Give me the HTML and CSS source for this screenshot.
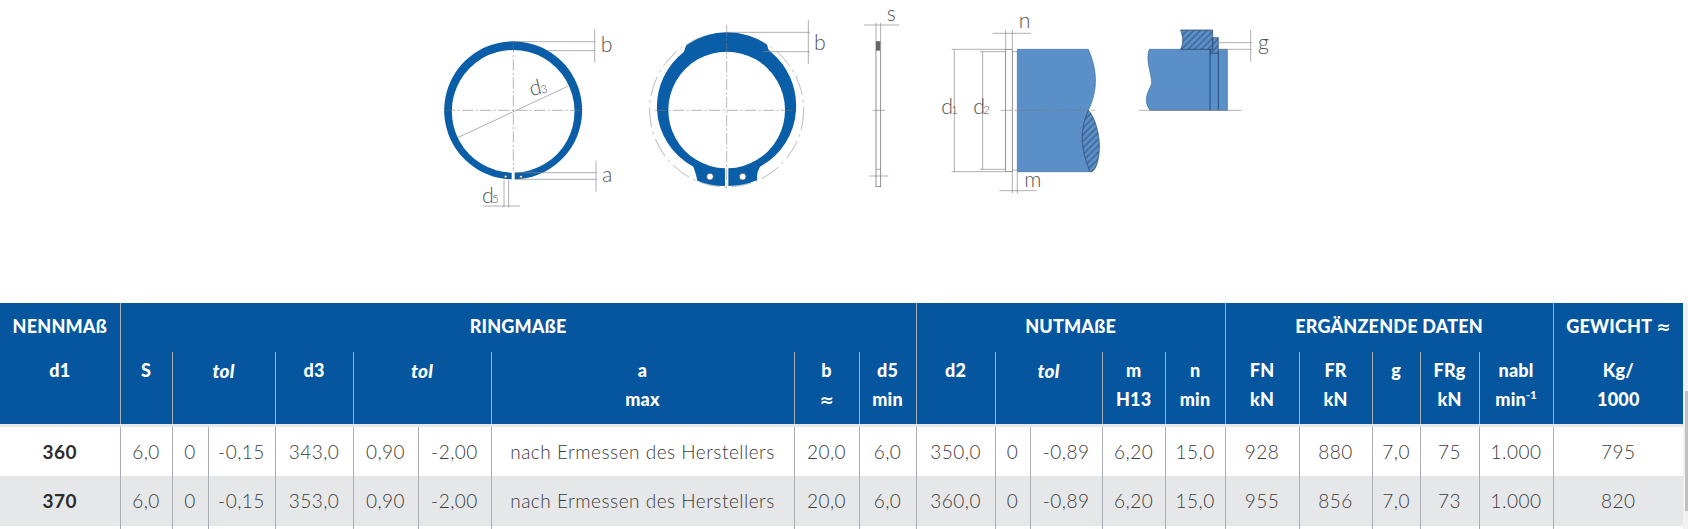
FILE: index.html
```html
<!DOCTYPE html>
<html>
  <head>
    <meta charset="UTF-8" />
    <title>Sicherungsringe</title>
    <link rel="stylesheet" href="styles.css">
  </head>
  <body>
    <!-- technical drawing, coordinates are 3x the real pixels -->
    <div class="drawing">
      <svg width="860" height="210" viewBox="0 0 2580 630">
        <defs>
          <pattern id="hatch" width="14" height="14" patternUnits="userSpaceOnUse" patternTransform="rotate(-45)">
            <rect width="14" height="14" fill="#5b8fc7" />
            <line x1="0" y1="3" x2="14" y2="3" stroke="#1f3f66" stroke-width="2.4" />
          </pattern>
        </defs>

        <!-- ring 1 -->
        <path class="ring" d="M284,538 A207,207 0 1 0 275,538 L275,518 A184,184 0 1 1 284,518 Z" />
        <circle class="hole" cx="257" cy="530" r="4" />
        <circle class="hole" cx="303" cy="530" r="4" />
        <path class="center" d="M72,331 H488 M280,124 V512" />
        <path class="dim" d="M113,413 L445,258 M280,125 H525 M380,152 H525 M524,88 V188 M284,518 H530 M284,538 H530 M528,482 V575 M252,540 V622 M266,540 V622 M190,618 H300" />
        <text class="label" x="542" y="157">b</text>
        <text class="label" x="546" y="545">a</text>
        <text class="label" x="186" y="609">d</text>
        <text class="label-sm" x="216" y="609">5</text>
        <g transform="rotate(-14 334 289)">
          <text class="label" x="334" y="289">d</text>
          <text class="label-sm" x="366" y="289">3</text>
        </g>

        <!-- ring 2 -->
        <circle class="dashed" cx="920" cy="330" r="231" />
        <path class="ring" d="M800,135 A212,212 0 0 1 1042,135 Q1043,150 1052,155 A210,210 0 0 1 1128,330 A205,205 0 0 1 1020,500 Q1008,520 1012,540 A220,220 0 0 1 925,558 L925,505 A175,175 0 1 0 915,505 L915,558 A220,220 0 0 1 832,542 Q828,520 820,500 A205,205 0 0 1 711,330 A210,210 0 0 1 792,155 Q795,140 800,135 Z" />
        <circle class="hole" cx="870" cy="530" r="10" />
        <circle class="hole" cx="968" cy="530" r="10" />
        <path class="center" d="M705,331 H1135 M920,75 V565" />
        <path class="dim" d="M920,97 H1170 M1030,155 H1170 M1165,60 V192" />
        <text class="label" x="1182" y="150">b</text>

        <!-- side view, shaft and groove detail, moved over by the second crop -->
        <g transform="translate(1260,0)">
          <rect class="part" x="108" y="125" width="14" height="435" />
          <rect x="108" y="125" width="12" height="27" fill="#666" />
          <path class="dim" d="M72,75 H178 M108,68 V125 M122,68 V125 M98,331 H135 M88,528 H145 M108,508 H122" />
          <text class="label" x="140" y="62">s</text>

          <path class="shaft" d="M532,148 H745 C772,210 775,270 745,331 C720,390 720,440 750,515 H532 Z" />
          <path class="lens" d="M745,331 C720,390 720,440 750,515 C768,520 780,470 778,430 C775,385 760,345 745,331 Z" />
          <rect class="part" x="497" y="148" width="20" height="367" />
          <path class="dim" d="M517,155 H532 M517,510 H532 M497,90 V148 M517,90 V148 M458,100 H573 M517,515 V580 M532,515 V580 M478,572 H590 M335,148 H497 M335,515 H497 M343,148 V515 M420,155 H497 M420,508 H497 M428,155 V508" />
          <path class="center" d="M483,331 H765" />
          <text class="label" x="536" y="85">n</text>
          <text class="label" x="553" y="560">m</text>
          <text class="label" x="304" y="342">d</text>
          <text class="label-sm" x="334" y="342">1</text>
          <text class="label" x="400" y="342">d</text>
          <text class="label-sm" x="430" y="342">2</text>

          <path class="shaft" d="M928,148 H1162 V331 H930 C905,295 930,270 935,250 C935,220 915,180 928,148 Z" />
          <path class="lens" d="M1022,90 H1118 V148 H1022 C1032,125 1028,110 1022,90 Z" />
          <path class="lens" d="M1118,113 H1135 V160 H1112 V148 H1118 Z" />
          <path class="groove" d="M1110,148 V331 M1135,160 V331" />
          <path class="dim" d="M897,331 H1205 M1135,128 H1235 M1135,148 H1235 M1232,90 V185" />
          <text class="label" x="1254" y="150">g</text>
        </g>
      </svg>
    </div>

    <div class="table-wrap">
      <table class="sizes">
        <colgroup>
          <col style="width: 120px" />
          <col style="width: 52px" />
          <col style="width: 36px" />
          <col style="width: 67px" />
          <col style="width: 78px" />
          <col style="width: 65px" />
          <col style="width: 73px" />
          <col style="width: 303px" />
          <col style="width: 65px" />
          <col style="width: 57px" />
          <col style="width: 79px" />
          <col style="width: 35px" />
          <col style="width: 72px" />
          <col style="width: 63px" />
          <col style="width: 60px" />
          <col style="width: 74px" />
          <col style="width: 73px" />
          <col style="width: 48px" />
          <col style="width: 59px" />
          <col style="width: 74px" />
          <col style="width: 130px" />
        </colgroup>
        <thead>
          <tr class="groups">
            <th>NENNMAß</th>
            <th colspan="9">RINGMAßE</th>
            <th colspan="5">NUTMAßE</th>
            <th colspan="5">ERGÄNZENDE DATEN</th>
            <th>GEWICHT <span class="approx">≈</span></th>
          </tr>
          <tr class="names">
            <th>d1</th>
            <th>S</th>
            <th colspan="2"><em>tol</em></th>
            <th>d3</th>
            <th colspan="2"><em>tol</em></th>
            <th>a<br />max</th>
            <th>b<br /><span class="approx">≈</span></th>
            <th>d5<br />min</th>
            <th>d2</th>
            <th colspan="2"><em>tol</em></th>
            <th>m<br />H13</th>
            <th>n<br />min</th>
            <th>FN<br />kN</th>
            <th>FR<br />kN</th>
            <th>g</th>
            <th>FRg<br />kN</th>
            <th>nabl<br />min<sup>-1</sup></th>
            <th>Kg/<br />1000</th>
          </tr>
        </thead>
        <tbody>
          <tr>
            <td class="size">360</td><td>6,0</td><td>0</td><td>-0,15</td><td>343,0</td><td>0,90</td><td>-2,00</td>
            <td>nach Ermessen des Herstellers</td><td>20,0</td><td>6,0</td><td>350,0</td><td>0</td><td>-0,89</td>
            <td>6,20</td><td>15,0</td><td>928</td><td>880</td><td>7,0</td><td>75</td><td>1.000</td><td>795</td>
          </tr>
          <tr>
            <td class="size">370</td><td>6,0</td><td>0</td><td>-0,15</td><td>353,0</td><td>0,90</td><td>-2,00</td>
            <td>nach Ermessen des Herstellers</td><td>20,0</td><td>6,0</td><td>360,0</td><td>0</td><td>-0,89</td>
            <td>6,20</td><td>15,0</td><td>955</td><td>856</td><td>7,0</td><td>73</td><td>1.000</td><td>820</td>
          </tr>
          <!-- next row is cut off by the window, only its lines show -->
          <tr class="cut">
            <td></td><td></td><td></td><td></td><td></td><td></td><td></td>
            <td></td><td></td><td></td><td></td><td></td><td></td>
            <td></td><td></td><td></td><td></td><td></td><td></td><td></td><td></td>
          </tr>
        </tbody>
      </table>
      <div class="scrollbar"><div class="thumb"></div></div>
    </div>
  </body>
</html>
```

FILE: styles.css
```css
body {
  margin: 0;
  background: #fff;
  font-family: Lato, "Liberation Sans", sans-serif;
  overflow: hidden;
}

/* drawing area above the table */
.drawing {
  height: 303px;
  padding-left: 420px;
  box-sizing: border-box;
}
.drawing svg {
  display: block;
}
.ring {
  fill: #0a5ea8;
}
.hole {
  fill: #fff;
  stroke: #444;
  stroke-width: 2;
}
.center {
  fill: none;
  stroke: #777;
  stroke-width: 1.6;
  stroke-dasharray: 34 7 6 7;
}
.dashed {
  fill: none;
  stroke: #999;
  stroke-width: 2;
  stroke-dasharray: 60 14 8 14;
}
.dim {
  fill: none;
  stroke: #888;
  stroke-width: 2;
}
.part {
  fill: #fff;
  stroke: #777;
  stroke-width: 2.4;
}
.shaft {
  fill: #5b8fc7;
  stroke: #3c6a9e;
  stroke-width: 2;
}
.lens {
  fill: url(#hatch);
  stroke: #1f3f66;
  stroke-width: 2;
}
.groove {
  fill: none;
  stroke: #2c5585;
  stroke-width: 3.5;
}
.label {
  font-size: 64px;
  font-weight: 300;
  fill: #555;
}
.label-sm {
  font-size: 34px;
  font-weight: 300;
  fill: #555;
}

/* table */
.table-wrap {
  display: flex;
  align-items: flex-start;
}
.sizes {
  table-layout: fixed;
  width: 1683px;
  border-collapse: collapse;
  flex: none;
}
.sizes th {
  background: #05569e;
  color: #fff;
  font-size: 18px;
  font-weight: 900;
  letter-spacing: 0.2px;
  line-height: 29px;
  padding: 0;
  text-align: center;
  border-left: 1px solid #a9adb5;
}
.sizes th em {
  font-size: 19px;
}
.sizes th sup {
  font-size: 11px;
  line-height: 0;
}
.approx {
  font-family: "DejaVu Sans", sans-serif;
  font-size: 17px;
  font-weight: 700;
  letter-spacing: 0;
}
.groups th {
  height: 49px;
  padding-bottom: 2px;
  box-sizing: border-box;
}
.names th {
  height: 73px;
  vertical-align: top;
  padding-top: 4px;
  box-sizing: border-box;
}
.sizes tr > th:first-child,
.sizes tr > td:first-child {
  border-left: 0;
}
.sizes td {
  height: 49px;
  padding: 0;
  text-align: center;
  font-size: 19px;
  font-weight: 300;
  letter-spacing: 0.5px;
  color: #3c3c3c;
  border-left: 1px solid #a9adb5;
}
.sizes td.size {
  font-weight: 700;
  color: #2b2b2b;
}
.sizes tbody tr:first-child td {
  border-top: 3px solid #e6e7e9;
}
.sizes tbody tr:nth-child(2) td {
  height: 50px;
  background: #e6e7e9;
}
.sizes tbody tr.cut td {
  height: 10px;
}

.scrollbar {
  width: 5px;
  height: 226px;
  flex: none;
  background: #f1f1f1;
}
.thumb {
  margin-top: 88px;
  margin-left: 2px;
  height: 120px;
  background: #c1c1c1;
}
```
